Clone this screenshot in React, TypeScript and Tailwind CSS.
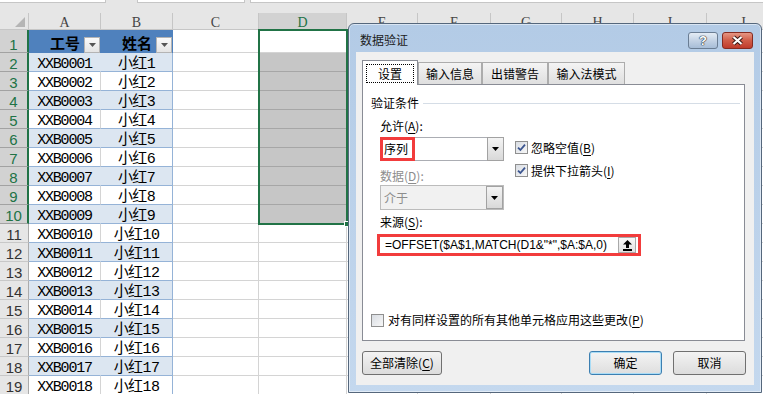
import React from 'react';

const restCols = ['w-[71px]', 'w-[73px]', 'w-[71px]', 'w-[72px]', 'w-[73px]', 'w-[73px]'];
const headCols = [
  { label: 'A', w: 'w-[72px]' },
  { label: 'B', w: 'w-[72px]' },
  { label: 'C', w: 'w-[86px]' },
  { label: 'D', w: 'w-[88px]' },
  { label: 'E', w: 'w-[71px]' },
  { label: 'F', w: 'w-[73px]' },
  { label: 'G', w: 'w-[71px]' },
  { label: 'H', w: 'w-[72px]' },
  { label: 'I', w: 'w-[73px]' },
  { label: 'J', w: 'w-[73px]' },
];
const rows = Array.from({ length: 19 }, (_, i) => i + 1);

const Tri = ({ color = '#000' }: { color?: string }) => (
  <svg width="7" height="4" viewBox="0 0 7 4">
    <path d="M0 0H7L3.5 4Z" fill={color} />
  </svg>
);

const FilterBtn = () => (
  <div className="absolute right-[1px] top-[7px] w-[16px] h-[16px] border border-[#b4b4b4] bg-linear-to-b from-[#fafafa] to-[#e4e4e4] flex items-center justify-center">
    <Tri color="#555" />
  </div>
);

const Row = ({ n }: { n: number }) => {
  const sel = n <= 10;
  const band = n % 2 === 0;
  const h = n === 1 ? 'h-[23px]' : 'h-[19px]';
  return (
    <div className={`flex shrink-0 ${h}`}>
      <div
        className={`w-[29px] shrink-0 flex items-end justify-center pb-[1px] border-b font-['Liberation_Sans',sans-serif] text-[15px] leading-[12px] ${
          sel
            ? 'bg-[#d2d2d2] text-[#217346] border-b-[#a2a2a2] border-r-2 border-r-[#217346]'
            : 'bg-[#e6e6e6] text-[#333] border-b-[#c8c8c8] border-r border-r-[#ababab]'
        }`}
      >
        {n}
      </div>
      {n === 1 ? (
        <>
          <div className="relative w-[72px] shrink-0 bg-[#4f81bd] flex items-end justify-center pb-[2px]">
            <span className="font-['Noto_Sans_CJK_SC',sans-serif] font-bold text-[15px] leading-[17px]">工号</span>
            <FilterBtn />
          </div>
          <div className="relative w-[72px] shrink-0 bg-[#4f81bd] flex items-end justify-center pb-[2px]">
            <span className="font-['Noto_Sans_CJK_SC',sans-serif] font-bold text-[15px] leading-[17px]">姓名</span>
            <FilterBtn />
          </div>
        </>
      ) : (
        <>
          <div
            className={`w-[72px] shrink-0 flex items-end justify-center pb-[1px] border-b border-b-[#95b3d7] border-r font-['Liberation_Mono',monospace] text-[15px] tracking-[-1.2px] leading-[11px] ${
              band ? 'bg-[#dce6f1] border-r-[#dce6f1]' : 'bg-white border-r-[#d4d4d4]'
            }`}
          >
            {`XXB${String(n - 1).padStart(4, '0')}`}
          </div>
          <div
            className={`w-[72px] shrink-0 flex items-end justify-center pb-[1px] border-b border-b-[#95b3d7] border-r border-r-[#95b3d7] font-['Liberation_Mono','Noto_Sans_CJK_SC',monospace] text-[15px] tracking-[-0.6px] leading-[11px] ${
              band ? 'bg-[#dce6f1]' : 'bg-white'
            }`}
          >
            {`小红${n - 1}`}
          </div>
        </>
      )}
      <div className="w-[86px] shrink-0 bg-white border-r border-b border-[#d4d4d4]" />
      <div
        className={`w-[88px] shrink-0 border-r border-r-[#d4d4d4] border-b ${
          sel && n > 1 ? 'bg-[#c6c6c6] border-b-[#a6a6a6]' : 'bg-white border-b-[#d4d4d4]'
        }`}
      />
      {restCols.map((w, i) => (
        <div key={i} className={`${w} shrink-0 bg-white border-r border-b border-[#d4d4d4]`} />
      ))}
    </div>
  );
};

const Check = ({ checked }: { checked?: boolean }) => (
  <span className="w-[13px] h-[13px] shrink-0 border border-[#8f8f8f] bg-linear-to-br from-[#d9dde3] to-[#f7f7f7] flex items-center justify-center">
    {checked && (
      <svg width="9" height="9" viewBox="0 0 9 9">
        <path d="M1 4.6 L3.4 7 L8 1.6" fill="none" stroke="#3b5590" strokeWidth="1.8" />
      </svg>
    )}
  </span>
);

const DropBtn = () => (
  <div className="w-[17px] shrink-0 self-stretch border border-[#a2a2a2] bg-linear-to-b from-[#f4f4f4] to-[#d9d9d9] flex items-center justify-center">
    <Tri />
  </div>
);

const Key = ({ k }: { k: string }) => <span className="underline underline-offset-[2px]">{k}</span>;

const Dialog = () => (
  <div className="absolute left-[348px] top-[23px] w-[414px] h-[370px] rounded-t-[6px] border border-[#55677c] bg-linear-to-b from-[#b3cbe6] to-[#c4d8ee] shadow-[inset_0_0_0_1px_rgba(255,255,255,0.5)] flex flex-col font-['Noto_Sans_CJK_SC',sans-serif] text-[12px] text-black">
    <div className="h-[28px] shrink-0 flex items-start pl-[11px] pr-[8px]">
      <span className="mt-[8px] leading-[16px] text-[#1b1b1b]">数据验证</span>
      <div className="ml-auto mt-[8px] flex gap-[4px]">
        <div className="w-[30px] h-[17px] rounded-[3px] border border-[#6a7d93] bg-linear-to-b from-[#e4ecf5] via-[#c4d3e5] to-[#a7bdd7] flex items-center justify-center">
          <span className="font-['Liberation_Sans',sans-serif] font-bold text-[13px] leading-none text-white [text-shadow:0_0_1px_#1d2733,0_0_1px_#1d2733,0_0_1px_#1d2733]">?</span>
        </div>
        <div className="w-[31px] h-[17px] rounded-[3px] border border-[#852b21] bg-linear-to-b from-[#e59684] via-[#d05c48] to-[#bf3a2b] flex items-center justify-center">
          <svg width="13" height="11" viewBox="0 0 13 11">
            <path d="M2.5 2 L10.5 9 M10.5 2 L2.5 9" stroke="#3a1814" strokeWidth="4.2" />
            <path d="M2.5 2 L10.5 9 M10.5 2 L2.5 9" stroke="#fff" strokeWidth="2.2" />
          </svg>
        </div>
      </div>
    </div>

    <div className="mx-[7px] mb-[7px] flex-1 bg-[#f0f0f0] flex flex-col px-[6px] pt-[8px]">
      {/* tabs */}
      <div className="flex items-end h-[25px] -mb-px">
        <div className="relative z-10 w-[56px] h-[25px] bg-white border border-b-0 border-[#898c95] flex p-[3px] pb-[2px]">
          <div className="flex-1 border border-dotted border-black flex items-center justify-center leading-[16px]">设置</div>
        </div>
        {[
          ['输入信息', 'w-[64px]'],
          ['出错警告', 'w-[66px]'],
          ['输入法模式', 'w-[77px]'],
        ].map(([t, w]) => (
          <div
            key={t}
            className={`${w} h-[23px] border border-b-0 border-[#acacac] bg-linear-to-b from-[#f4f4f4] to-[#dedede] flex items-center justify-center leading-[16px] pb-[1px]`}
          >
            {t}
          </div>
        ))}
      </div>

      {/* tab panel */}
      <div className="w-[383px] h-[257px] shrink-0 bg-white border border-[#898c95] flex flex-col">
        <div className="flex items-center mt-[10px] ml-[8px] mr-[4px] h-[16px]">
          <span className="leading-[16px]">验证条件</span>
          <div className="flex-1 h-px bg-[#d5dde6] ml-[4px]" />
        </div>

        <div className="flex mt-[7px] ml-[17px]">
          <div className="w-[124px] flex flex-col">
            <span className="leading-[16px]">
              允许(<Key k="A" />):
            </span>
            <div className="mt-[3px] h-[24px] flex">
              <div className="w-[35px] border-[3px] border-[#f23c3c] bg-white flex items-center pl-[1px] leading-[16px]">序列</div>
              <div className="flex-1 border-y border-[#abadb3] bg-white" />
              <DropBtn />
            </div>
            <span className="mt-[7px] leading-[16px] text-[#8d8d8d]">
              数据(<Key k="D" />):
            </span>
            <div className="mt-[1px] h-[25px] flex border border-[#bcbcbc] bg-[#f1f1f1]">
              <span className="flex-1 flex items-center pl-[3px] text-[#8d8d8d] leading-[16px]">介于</span>
              <DropBtn />
            </div>
            <span className="mt-[4px] leading-[16px]">
              来源(<Key k="S" />):
            </span>
          </div>
          <div className="ml-[11px] pt-[23px] flex flex-col gap-[10px]">
            <div className="flex items-center gap-[3px] h-[13px]">
              <Check checked />
              <span className="leading-[16px]">
                忽略空值(<Key k="B" />)
              </span>
            </div>
            <div className="flex items-center gap-[3px] h-[13px]">
              <Check checked />
              <span className="leading-[16px]">
                提供下拉箭头(<Key k="I" />)
              </span>
            </div>
          </div>
        </div>

        <div className="mt-[4px] ml-[14px] w-[264px] h-[22px] border-[3px] border-[#f23c3c] bg-white flex items-center pl-[5px] pr-[2px]">
          <span className="font-['Liberation_Sans',sans-serif] text-[12px] leading-none whitespace-nowrap">
            =OFFSET($A$1,MATCH(D1&amp;"*",$A:$A,0)
          </span>
          <div className="ml-auto w-[18px] h-[16px] border border-[#a9a9a9] bg-linear-to-b from-[#f8f8f8] to-[#e2e2e2] flex items-center justify-center">
            <svg width="9" height="11" viewBox="0 0 9 11">
              <path d="M4.5 0 L9 4.5 H6 V8 H3 V4.5 H0 Z" fill="#000" />
              <rect x="0" y="9" width="9" height="2" fill="#000" />
            </svg>
          </div>
        </div>

        <div className="mt-auto mb-[12px] ml-[8px] flex items-center gap-[4px]">
          <Check />
          <span className="leading-[16px]">
            对有同样设置的所有其他单元格应用这些更改(<Key k="P" />)
          </span>
        </div>
      </div>

      {/* buttons */}
      <div className="mt-[10px] h-[24px] flex pr-[2px]">
        <div className="w-[80px] rounded-[3px] border border-[#707070] bg-linear-to-b from-[#f3f3f3] to-[#dcdcdc] flex items-center justify-center leading-[16px]">
          全部清除(<Key k="C" />)
        </div>
        <div className="ml-auto w-[73px] rounded-[3px] border border-[#3c7fb1] shadow-[inset_0_0_0_1px_#a9dcf6] bg-linear-to-b from-[#f4f4f4] to-[#dedede] flex items-center justify-center leading-[16px]">
          确定
        </div>
        <div className="ml-[11px] w-[73px] rounded-[3px] border border-[#707070] bg-linear-to-b from-[#f3f3f3] to-[#dcdcdc] flex items-center justify-center leading-[16px]">
          取消
        </div>
      </div>
    </div>
  </div>
);

export default function App() {
  return (
    <div className="relative w-[763px] h-[394px] overflow-hidden bg-white">
      <div className="w-max flex flex-col">
        {/* name box / formula bar strip */}
        <div className="h-[13px] shrink-0 bg-[#e6e6e6] flex items-start">
          <div className="w-[106px] h-[3px] bg-white border-b border-r border-[#c6c6c6]" />
          <div className="ml-[31px] w-[108px] h-[3px] bg-white border-b border-x border-[#c6c6c6]" />
          <div className="ml-[5px] w-[520px] h-[3px] bg-white border-b border-l border-[#c6c6c6]" />
        </div>
        {/* column headers */}
        <div className="flex h-[17px] shrink-0 bg-[#e6e6e6]">
          <div className="w-[29px] shrink-0 border-r border-b border-[#c6c6c6] flex items-end justify-end pr-[3px] pb-[2px]">
            <svg width="10" height="10" viewBox="0 0 10 10">
              <path d="M10 0V10H0Z" fill="#b5b5b5" />
            </svg>
          </div>
          {headCols.map((c) => (
            <div
              key={c.label}
              className={`${c.w} shrink-0 border-r border-b border-[#c6c6c6] flex justify-center items-start pt-[3px] font-['Liberation_Serif',serif] text-[14px] leading-[14px] ${
                c.label === 'D' ? 'bg-[#d2d2d2] text-[#217346]' : 'text-[#444]'
              }`}
            >
              {c.label}
            </div>
          ))}
        </div>
        {rows.map((n) => (
          <Row key={n} n={n} />
        ))}
      </div>

      {/* selection outline on D1:D10 */}
      <div className="absolute left-[258px] top-[29px] w-[90px] h-[196px] border-2 border-[#217346] pointer-events-none">
        <div className="absolute -right-[4px] -bottom-[4px] w-[6px] h-[6px] bg-[#217346] border border-white" />
      </div>

      <Dialog />
    </div>
  );
}
